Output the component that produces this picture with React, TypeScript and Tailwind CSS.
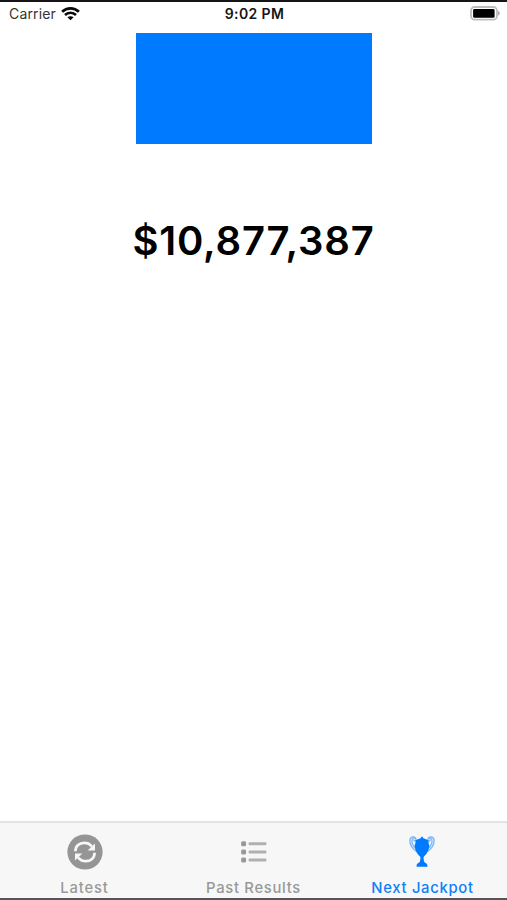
import React from "react";

function StatusBar() {
  return (
    <header className="grid h-[31px] grid-cols-3 items-start pt-[2px] pr-[7px] pl-[9px] leading-[20px]">
      <div className="flex items-center gap-[5px]">
        <span className="text-[14px] tracking-[0.15px] text-[#333]">Carrier</span>
        <svg width="19" height="15" viewBox="0 0 19 15" fill="none" stroke="#080808" strokeWidth="2.7">
          <path d="M1.1 4.8C5.8 .2 13.2 .2 17.9 4.8" />
          <path d="M4 7.9C7.2 5 11.8 5 15 7.9" />
          <path d="M6.4 10.2C8.2 8.8 10.8 8.8 12.6 10.2L9.5 13.3Z" fill="#080808" stroke="none" />
        </svg>
      </div>
      <span className="text-center text-[14px] font-semibold tracking-[0.4px] whitespace-nowrap text-[#151515]">9:02 PM</span>
      <svg className="mt-[2px] justify-self-end" width="30" height="15" viewBox="0 0 30 15">
        <rect x="1" y="1" width="26" height="12.6" rx="3.7" fill="#fff" stroke="#bdbdbd" strokeWidth="1.8" />
        <rect x="3.1" y="3" width="21.5" height="8.8" rx="1.4" fill="#000" />
        <path d="M28 5C30.3 5.7 30.3 8.9 28 9.6Z" fill="#aaa" />
      </svg>
    </header>
  );
}

function RefreshIcon() {
  return (
    <svg width="36" height="36" viewBox="0 0 36 36">
      <circle cx="18" cy="18" r="17.6" fill="#959595" />
      <g id="arrow">
        <path d="M8.4 17.2C8.4 12 12.3 8.9 17.2 8.9C20.5 8.9 23.2 10.3 24.8 12.6" fill="none" stroke="#f7f7f7" strokeWidth="2.7" />
        <path d="M28 9.4V16.6H20.6Z" fill="#f7f7f7" />
      </g>
      <use href="#arrow" transform="rotate(180 18 18)" />
    </svg>
  );
}

function ListIcon() {
  return (
    <svg width="28" height="36" viewBox="0 0 28 36">
      {[9.8, 18, 26].map((y) => (
        <g key={y}>
          <rect x="1.1" y={y - 2.5} width="5" height="5" rx="1.5" fill="#999" />
          <rect x="8.6" y={y - 1.5} width="17.8" height="3" rx="1" fill="#b0b0b0" />
        </g>
      ))}
    </svg>
  );
}

function TrophyIcon() {
  return (
    <svg className="mr-[2px]" width="28" height="36" viewBox="0 0 28 36">
      <g id="handle" fill="none" stroke="#007aff" strokeWidth="1.4" opacity=".5">
        <path d="M8.5 17.5C5 15 1.9 10.6 1.9 6.8C1.9 2.2 7.2 1.8 8 5.2C8.2 6.8 6.3 7.2 5.8 5.9" />
        <path d="M8 14.5C5.4 12.2 3.4 9 4.1 6.2C4.4 5 5.4 4.4 6.8 4.6" />
      </g>
      <use href="#handle" transform="matrix(-1 0 0 1 28 0)" />
      <path d="M14 2.3L15.7 4.6C17.2 4.9 18.8 5.8 20.6 6.5V9.6L21.2 10.8C21.4 16 19 20 15.9 22.4L15.5 24L16 27.2C16.2 28.7 19 29 19.4 31V32.8H8.6V31C9 29 11.8 28.7 12 27.2L12.5 24L12.1 22.4C9 20 6.6 16 6.8 10.8L7.4 9.6V6.5C9.2 5.8 10.8 4.9 12.3 4.6Z" fill="#007aff" />
    </svg>
  );
}

const tabs = [
  { label: "Latest", icon: <RefreshIcon />, style: "text-[#999] tracking-[0.85px]" },
  { label: "Past Results", icon: <ListIcon />, style: "text-[#999] tracking-[0.7px]" },
  { label: "Next Jackpot", icon: <TrophyIcon />, style: "text-[#0b80f8] tracking-[0.7px]" },
];

export default function App() {
  return (
    <div className="flex h-[900px] w-[507px] flex-col overflow-hidden border-t-2 border-b-2 border-t-[#151517] border-b-[#555] bg-white font-['Inter','Liberation_Sans',sans-serif]">
      <StatusBar />
      <main className="flex flex-1 flex-col items-center">
        <div className="h-[111px] w-[236px] bg-[#007aff]" />
        <p className="mt-[73px] text-[40px] leading-[48px] font-semibold tracking-[0.8px] whitespace-nowrap text-black">$10,877,387</p>
      </main>
      <nav className="grid h-[77px] grid-cols-3 border-t-2 border-[#e3e3e3] bg-[#f7f7f7]">
        {tabs.map((tab) => (
          <button key={tab.label} className={"flex flex-col items-center pt-[11px] text-[14.8px] leading-[18px] font-medium whitespace-nowrap " + tab.style}>
            {tab.icon}
            <span className="mt-[9px]">{tab.label}</span>
          </button>
        ))}
      </nav>
    </div>
  );
}
